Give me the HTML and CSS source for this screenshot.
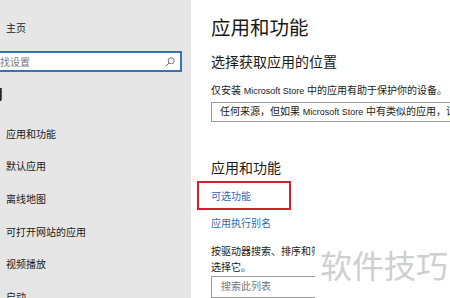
FILE: index.html
```html
<!DOCTYPE html>
<html>
    <head>
        <title>应用和功能</title>
        <link rel="stylesheet" href="styles.css">
    </head>

    <body>
        <div class="window">
            <nav class="sidebar">
                <div class="navHome">主页</div>
                <div class="findBox">
                    <span>查找设置</span>
                    <svg width="10" height="10" viewBox="0 0 10 10">
                        <circle cx="6.2" cy="3.8" r="3" fill="none" stroke="#666" stroke-width="0.9"/>
                        <line x1="4" y1="6" x2="0.8" y2="9.2" stroke="#666" stroke-width="1"/>
                    </svg>
                </div>
                <div class="navTitle">应用</div>
                <div class="navItem">应用和功能</div>
                <div class="navItem">默认应用</div>
                <div class="navItem">离线地图</div>
                <div class="navItem">可打开网站的应用</div>
                <div class="navItem">视频播放</div>
                <div class="navItem">启动</div>
            </nav>

            <main class="content">
                <h1>应用和功能</h1>
                <h2 class="firstSub">选择获取应用的位置</h2>
                <p class="desc">仅安装 <span class="latin">Microsoft Store</span> 中的应用有助于保护你的设备。</p>
                <div class="dropdown">任何来源，但如果 <span class="latin">Microsoft Store</span> 中有类似的应用，请通知我</div>

                <h2 class="secondSub">应用和功能</h2>
                <div class="highlight">
                    <a class="link">可选功能</a>
                </div>
                <a class="link linkAlias">应用执行别名</a>

                <p class="filterText">按驱动器搜索、排序和筛选。若要卸载或移动应用，请从列表中选择它。</p>
                <div class="listSearch">搜索此列表</div>
            </main>

            <div class="watermark">软件技巧</div>
        </div>
    </body>
</html>
```

FILE: styles.css
```css
body {
    margin: 0;
    font-family: "Liberation Sans", "Noto Sans CJK SC", sans-serif;
    font-size: 10px;
    color: #1a1a1a;
}

.window {
    display: flex;
    width: 450px;
    height: 298px;
    overflow: hidden;
    position: relative;
}

.latin {
    font-size: 9px;
}

/* left navigation */
.sidebar {
    width: 191px;
    flex-shrink: 0;
    background-color: #e6e6e6;
    padding: 19px 0 0 6px;
    box-sizing: border-box;
    overflow: hidden;
}

.navHome {
    line-height: 20px;
}

.findBox {
    display: flex;
    align-items: center;
    justify-content: space-between;
    margin: 12px 0 0 -26px;
    width: 202px;
    height: 21px;
    box-sizing: border-box;
    padding: 0 5px 0 8px;
    background-color: #fff;
    border: 2px solid #3a72b5;
    color: #7a7a7a;
}

.navTitle {
    margin: 12px 0 0 -31px;
    line-height: 20px;
    font-size: 14px;
    font-weight: bold;
}

.navTitle + .navItem {
    margin-top: 14.5px;
}

.navItem {
    height: 32.7px;
    line-height: 32.7px;
}

/* right content */
.content {
    flex-grow: 1;
    padding: 16px 0 0 20px;
    overflow: hidden;
    white-space: nowrap;
}

h1 {
    margin: 0;
    line-height: 25px;
    font-size: 19.5px;
    font-weight: normal;
}

h2 {
    margin: 0;
    line-height: 20px;
    font-size: 14px;
    font-weight: normal;
}

.firstSub {
    margin-top: 11px;
}

.desc {
    margin: 11px 0 0 0;
    line-height: 16px;
}

.dropdown {
    margin-top: 3px;
    width: 300px;
    height: 20px;
    line-height: 18px;
    box-sizing: border-box;
    padding-left: 8px;
    border: 1px solid #999;
}

.secondSub {
    margin-top: 36px;
}

.highlight {
    margin: 3px 0 0 -14px;
    width: 94px;
    height: 29px;
    box-sizing: border-box;
    padding: 6px 0 0 12px;
    border: 2px solid #d5202b;
}

.link {
    display: block;
    line-height: 16px;
    color: #2a6ab5;
}

.linkAlias {
    margin-top: 6px;
}

.filterText {
    margin: 12px 0 0 0;
    width: 285px;
    line-height: 16px;
    white-space: normal;
}

.listSearch {
    width: 240px;
    height: 22px;
    line-height: 20px;
    box-sizing: border-box;
    padding-left: 9px;
    border: 1px solid #999;
    color: #777;
}

.watermark {
    position: absolute;
    left: 315px;
    top: 240px;
    width: 135px;
    height: 58px;
    padding-left: 5px;
    box-sizing: border-box;
    background-color: #fff;
    color: #cfcfcf;
    font-family: "Noto Sans CJK SC", sans-serif;
    font-size: 32px;
    line-height: 48px;
    white-space: nowrap;
}
```
